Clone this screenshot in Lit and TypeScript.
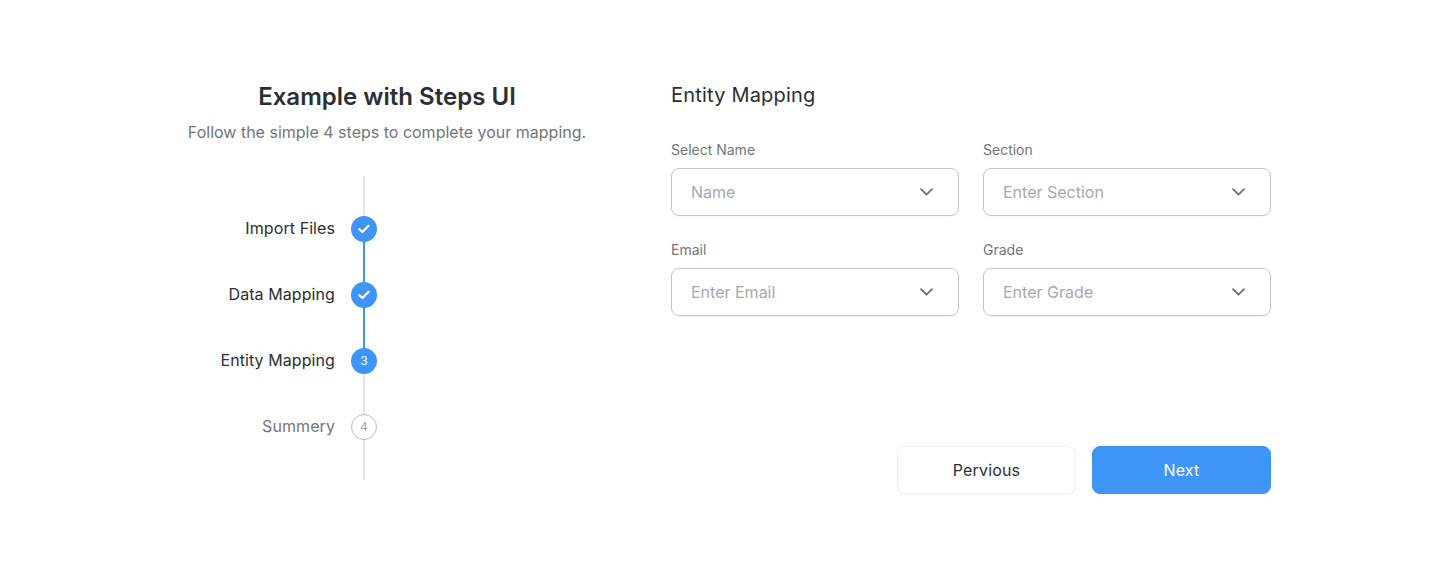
import { LitElement, html, css, nothing } from 'lit';
import { customElement } from 'lit/decorators.js';

type Step = { label: string; state: 'done' | 'current' | 'todo'; n: number };

const steps: Step[] = [
  { label: 'Import Files', state: 'done', n: 1 },
  { label: 'Data Mapping', state: 'done', n: 2 },
  { label: 'Entity Mapping', state: 'current', n: 3 },
  { label: 'Summery', state: 'todo', n: 4 },
];

const fields = [
  { label: 'Select Name', placeholder: 'Name' },
  { label: 'Section', placeholder: 'Enter Section' },
  { label: 'Email', placeholder: 'Enter Email' },
  { label: 'Grade', placeholder: 'Enter Grade' },
];

@customElement('app-root')
export class AppRoot extends LitElement {
  static styles = css`
    :host {
      display: block;
      height: 575px;
      background: #fff;
      font-family: Inter, 'Liberation Sans', sans-serif;
      color: #2b2f33;
      overflow: hidden;
    }

    .page {
      display: flex;
      padding: 80px 0 0 169px;
    }

    .intro {
      width: 436px;
      margin-right: 66px;
    }

    .intro h1 {
      margin: 0;
      height: 34px;
      font-size: 24px;
      line-height: 34px;
      font-weight: 600;
      letter-spacing: 0.02px;
      text-align: center;
    }

    .intro p {
      margin: 6px 0 0;
      height: 24px;
      font-size: 16px;
      line-height: 24px;
      color: #71767c;
      text-align: center;
    }

    .stepper {
      display: flex;
      flex-direction: column;
      margin-top: 32px;
    }

    .rail {
      width: 2px;
      height: 40px;
      margin-left: 194px;
      background: #e4e6e8;
    }

    .rail.on {
      background: #3f94f7;
    }

    .step {
      display: flex;
      align-items: center;
      gap: 16px;
      height: 26px;
    }

    .step__label {
      width: 166px;
      font-size: 16px;
      line-height: 24px;
      font-weight: 400;
      letter-spacing: 0.08px;
      text-align: right;
      position: relative;
      top: -1px;
    }

    .step.todo .step__label {
      color: #71767c;
    }

    .step__dot {
      box-sizing: border-box;
      display: flex;
      align-items: center;
      justify-content: center;
      width: 26px;
      height: 26px;
      border-radius: 50%;
      background: #3f94f7;
      color: #fff;
      font-size: 12px;
      line-height: 1;
    }

    .step.todo .step__dot {
      background: #fff;
      border: 1px solid #b9bcc0;
      color: #a2a6ab;
    }

    .form {
      width: 600px;
    }

    .form h2 {
      margin: 0;
      padding-top: 1px;
      height: 27px;
      font-size: 20px;
      line-height: 28px;
      font-weight: 400;
      letter-spacing: 0.2px;
    }

    .fields {
      display: grid;
      grid-template-columns: 288px 288px;
      column-gap: 24px;
      row-gap: 24px;
      margin-top: 32px;
    }

    .field label {
      display: block;
      height: 20px;
      font-size: 14px;
      line-height: 20px;
      color: #71767c;
      margin-bottom: 8px;
    }

    .select {
      box-sizing: border-box;
      display: flex;
      align-items: center;
      justify-content: space-between;
      height: 48px;
      padding: 0 25px 0 19px;
      border: 1px solid #c3c5c8;
      border-radius: 8px;
      box-shadow: 0 1px 2px rgba(0, 0, 0, 0.04);
      font-size: 16px;
      color: #a6aaae;
    }

    .select svg {
      display: block;
    }

    .actions {
      display: flex;
      justify-content: flex-end;
      gap: 16px;
      margin-top: 130px;
    }

    .btn {
      box-sizing: border-box;
      width: 179px;
      height: 48px;
      border-radius: 8px;
      border: 1px solid #eff0f2;
      background: #fff;
      color: #2b2f33;
      box-shadow: 0 1px 2px rgba(0, 0, 0, 0.03);
      font: 400 16px Inter, 'Liberation Sans', sans-serif;
      letter-spacing: 0.16px;
    }

    .btn.primary {
      background: #3f94f7;
      border-color: #3f94f7;
      color: #fff;
    }
  `;

  private check() {
    return html`<svg width="12" height="10" viewBox="0 0 12 10" fill="none">
      <path d="M1.4 5.2 4.4 8 10.6 1.8" stroke="#fff" stroke-width="2.2" stroke-linecap="round" stroke-linejoin="round" />
    </svg>`;
  }

  private renderStep(step: Step, i: number) {
    return html`
      ${i > 0 ? html`<div class="rail ${step.state !== 'todo' ? 'on' : ''}"></div>` : nothing}
      <div class="step ${step.state}">
        <span class="step__label">${step.label}</span>
        <span class="step__dot">${step.state === 'done' ? this.check() : step.n}</span>
      </div>
    `;
  }

  render() {
    return html`
      <div class="page">
        <section class="intro">
          <h1>Example with Steps UI</h1>
          <p>Follow the simple 4 steps to complete your mapping.</p>
          <div class="stepper">
            <div class="rail"></div>
            ${steps.map((s, i) => this.renderStep(s, i))}
            <div class="rail"></div>
          </div>
        </section>
        <section class="form">
          <h2>Entity Mapping</h2>
          <div class="fields">
            ${fields.map(
              (f) => html`
                <div class="field">
                  <label>${f.label}</label>
                  <div class="select">
                    <span>${f.placeholder}</span>
                    <svg width="13" height="8" viewBox="0 0 13 8" fill="none">
                      <path d="M1 1.2 6.5 6.6 12 1.2" stroke="#6c7278" stroke-width="1.8" stroke-linecap="round" stroke-linejoin="round" />
                    </svg>
                  </div>
                </div>
              `
            )}
          </div>
          <div class="actions">
            <button class="btn">Pervious</button>
            <button class="btn primary">Next</button>
          </div>
        </section>
      </div>
    `;
  }
}
